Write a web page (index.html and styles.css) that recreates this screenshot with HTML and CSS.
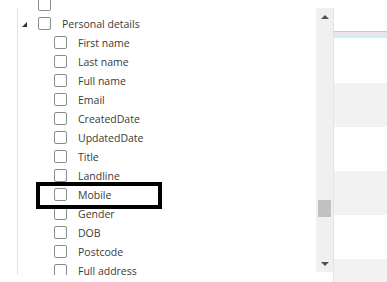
FILE: index.html
```html
<!DOCTYPE html>
<html>
<head>
	<title>Field picker</title>
	<link rel="stylesheet" href="styles.css">
</head>
<body>
<div class="layout">
	<div class="tree-pane">
		<ul class="tree">
			<li class="node"><span class="toggle"></span><span class="check"></span></li>
			<li class="node"><span class="toggle open"></span><span class="check"></span><span class="label">Personal details</span></li>
			<li class="node child"><span class="check"></span><span class="label">First name</span></li>
			<li class="node child"><span class="check"></span><span class="label">Last name</span></li>
			<li class="node child"><span class="check"></span><span class="label">Full name</span></li>
			<li class="node child"><span class="check"></span><span class="label">Email</span></li>
			<li class="node child"><span class="check"></span><span class="label">CreatedDate</span></li>
			<li class="node child"><span class="check"></span><span class="label">UpdatedDate</span></li>
			<li class="node child"><span class="check"></span><span class="label">Title</span></li>
			<li class="node child"><span class="check"></span><span class="label">Landline</span></li>
			<li class="node child marked"><span class="check"></span><span class="label">Mobile</span><span class="highlight"></span></li>
			<li class="node child"><span class="check"></span><span class="label">Gender</span></li>
			<li class="node child"><span class="check"></span><span class="label">DOB</span></li>
			<li class="node child"><span class="check"></span><span class="label">Postcode</span></li>
			<li class="node child"><span class="check"></span><span class="label">Full address</span></li>
		</ul>
	</div>
	<div class="scrollbar">
		<div class="arrow up"></div>
		<div class="track"><div class="thumb"></div></div>
		<div class="arrow down"></div>
	</div>
	<div class="grid-pane">
		<div class="grid-head"></div>
		<div class="grid-band"></div>
		<div class="grid-row first"></div>
		<div class="grid-row alt"></div>
		<div class="grid-row"></div>
		<div class="grid-row alt"></div>
		<div class="grid-row"></div>
		<div class="grid-row alt"></div>
	</div>
</div>
</body>
</html>
```

FILE: styles.css
```css
html, body{
	margin: 0;
	background-color: #fff;
}
.layout{
	display: flex;
	width: 387px;
	height: 282px;
	overflow: hidden;
	font-family: "Open Sans", "Liberation Sans", sans-serif;
	font-size: 10.5px;
	color: #3a3a3a;
}
.tree-pane{
	width: 316px;
	height: 275px;
	overflow: hidden;
	background: linear-gradient(#cfe9f1, #cfe9f1) no-repeat 17px 8px / 1px 267px;
}
.tree{
	list-style: none;
	margin: -6px 0 0 0;
	padding: 0;
}
.node{
	display: flex;
	align-items: center;
	height: 19px;
	padding-left: 22px;
}
.node:first-child{
	height: 20px;
}
.node.child{
	padding-left: 54px;
}
.marked{
	position: relative;
}
.toggle{
	width: 16px;
	height: 5px;
}
.toggle.open{
	width: 0;
	height: 0;
	margin: 1px 11px 0 0;
	border-left: 5px solid transparent;
	border-bottom: 5px solid #333;
}
.check{
	width: 13px;
	height: 13px;
	box-sizing: border-box;
	border: 1px solid #8c8c8c;
	border-radius: 2px;
	background-color: #fff;
}
.label{
	margin-left: 11px;
	white-space: nowrap;
}
.highlight{
	position: absolute;
	top: -3px;
	left: 36px;
	width: 126px;
	height: 27px;
	box-sizing: border-box;
	border: 4px solid #000;
}
.scrollbar{
	display: flex;
	flex-direction: column;
	width: 17px;
	height: 264px;
	margin-top: 8px;
	background-color: #f0f0f0;
}
.arrow{
	height: 17px;
	display: flex;
	align-items: center;
	justify-content: center;
}
.arrow::after{
	content: "";
	width: 0;
	height: 0;
	border-left: 4px solid transparent;
	border-right: 4px solid transparent;
}
.arrow.up::after{
	border-bottom: 4px solid #505050;
}
.arrow.down::after{
	border-top: 4px solid #505050;
}
.track{
	flex: 1;
	padding: 175px 2px 0 2px;
}
.thumb{
	height: 17px;
	background-color: #c1c1c1;
}
.grid-pane{
	flex: 1;
	margin-top: 8px;
	border-left: 1px solid #d3eaf2;
}
.grid-head{
	height: 23px;
	border-bottom: 1px solid #c8c8c8;
}
.grid-band{
	height: 6px;
	background: linear-gradient(#ece4ec 0, #ece4ec 3px, #d4edf2 3px, #d4edf2 6px);
}
.grid-row{
	height: 44px;
}
.grid-row.first{
	height: 45px;
}
.grid-row.alt{
	background-color: #f2f2f2;
}
```
